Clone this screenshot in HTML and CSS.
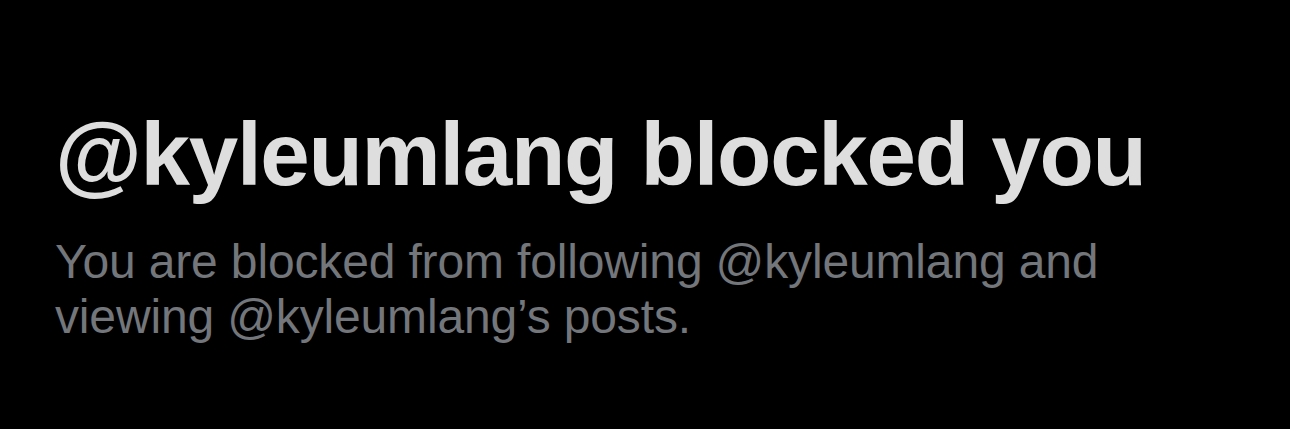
FILE: index.html
```html
<!DOCTYPE html>
<html lang="en">
<head>
    <meta charset="UTF-8">
    <meta name="viewport" content="width=device-width, initial-scale=1.0">
    <title>Blocked</title>
    <link rel="stylesheet" href="styles.css">
</head>
<body>
    <div class="container">
        <h1 class="title">@kyleumlang blocked you</h1>
        <p class="message">You are blocked from following @kyleumlang and<br>viewing @kyleumlang’s posts.</p>
    </div>
</body>
</html>
```

FILE: styles.css
```css
body {
    font-family: "Liberation Sans", Arial, sans-serif;
    margin: 0;
    height: 100vh;
    background-color: #000;
}
.container {
    padding: 104px 0 0 55px;
}
.title {
    margin: 0;
    font-size: 89px;
    font-weight: 700;
    line-height: 100px;
    color: #dedede;
    letter-spacing: -1.3px;
}
.message {
    margin: 30px 0 0;
    font-size: 48px;
    line-height: 55px;
    color: #73767a;
    letter-spacing: -0.15px;
}
```
